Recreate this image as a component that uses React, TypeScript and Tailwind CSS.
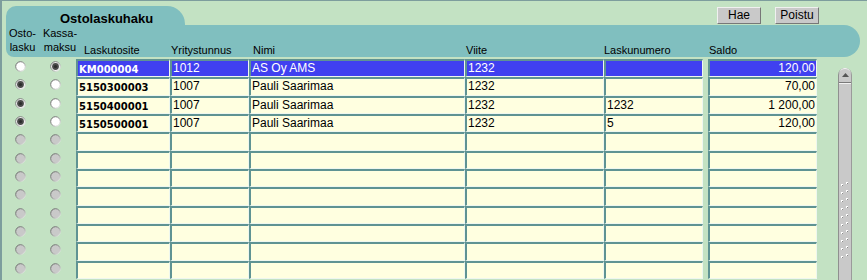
import React from "react";

type Row = {
  osto: boolean;
  kassa: boolean;
  tosite: string;
  yt: string;
  nimi: string;
  viite: string;
  nro: string;
  saldo: string;
  sel?: boolean;
  en: boolean;
};

const data: Row[] = [
  { osto: false, kassa: true, tosite: "KM000004", yt: "1012", nimi: "AS Oy AMS", viite: "1232", nro: "", saldo: "120,00", sel: true, en: true },
  { osto: true, kassa: false, tosite: "5150300003", yt: "1007", nimi: "Pauli Saarimaa", viite: "1232", nro: "", saldo: "70,00", en: true },
  { osto: true, kassa: false, tosite: "5150400001", yt: "1007", nimi: "Pauli Saarimaa", viite: "1232", nro: "1232", saldo: "1 200,00", en: true },
  { osto: true, kassa: false, tosite: "5150500001", yt: "1007", nimi: "Pauli Saarimaa", viite: "1232", nro: "5", saldo: "120,00", en: true },
];
while (data.length < 12) {
  data.push({ osto: false, kassa: false, tosite: "", yt: "", nimi: "", viite: "", nro: "", saldo: "", en: false });
}

function Radio({ checked, enabled }: { checked: boolean; enabled: boolean }) {
  const fill = enabled ? "#ffffff" : "#c9c9c9";
  return (
    <svg width="11" height="11" viewBox="0 0 11 11" className="block">
      <defs>
        <linearGradient id="rg" x1="0" y1="0" x2="1" y2="1">
          <stop offset="0" stopColor="#5a5a5a" />
          <stop offset="0.55" stopColor="#9a9a9a" />
          <stop offset="1" stopColor="#ffffff" />
        </linearGradient>
      </defs>
      <circle cx="5.5" cy="5.5" r="4.8" fill={fill} stroke="url(#rg)" strokeWidth="1" />
      {checked && <circle cx="5.5" cy="5.5" r="3.4" fill="#4a4a4a" />}
      {checked && <circle cx="5.5" cy="5.5" r="1.6" fill="#2c2c2c" />}
    </svg>
  );
}

const cellBase =
  "h-full border-t-2 border-l-2 border-r border-b border-t-[#5f9393] border-l-[#5f9393] border-r-[#eef7ef] border-b-[#eef7ef] overflow-hidden whitespace-nowrap";

function Cell({ w, sel, children, right, bold }: { w: string; sel?: boolean; children?: React.ReactNode; right?: boolean; bold?: boolean }) {
  return (
    <div
      className={`${cellBase} ${w} ${sel ? "bg-[#4040f0] text-white" : "bg-[#ffffe0] text-black"} ${right ? "text-right pr-[1px]" : "pl-[1px]"} ${
        bold ? "font-['DejaVu_Sans',sans-serif] font-bold text-[10px] leading-[15px] pt-[1px]" : "text-[12px] leading-[15px]"
      }`}
    >
      {children}
    </div>
  );
}

export default function App() {
  return (
    <div className="w-[867px] h-[280px] overflow-hidden bg-[#c3e2c3] border-t border-l-2 border-[#7d9d9d] font-['Liberation_Sans',Arial,sans-serif] text-black">
      {/* header */}
      <div className="flex justify-between items-start h-[24px]">
        <div className="mt-[5px] ml-[4px] w-[179px] h-[19px] bg-[#80bfbf] rounded-tl-[10px] rounded-tr-[18px] pl-[54px] pt-[5px] font-bold text-[13px] leading-[15px]">
          Ostolaskuhaku
        </div>
        <div className="flex gap-[14px] mt-[6px] mr-[48px]">
          <div className="w-[44px] h-[17px] bg-[#c9c9c9] border border-t-[#f0f0f0] border-l-[#f0f0f0] border-b-[#777777] border-r-[#777777] text-[12px] leading-[15px] text-center">
            Hae
          </div>
          <div className="w-[44px] h-[17px] bg-[#c9c9c9] border border-t-[#f0f0f0] border-l-[#f0f0f0] border-b-[#777777] border-r-[#777777] text-[12px] leading-[15px] text-center">
            Poistu
          </div>
        </div>
      </div>

      {/* label bar */}
      <div className="ml-[4px] w-[854px] h-[32px] bg-[#80bfbf] rounded-r-[16px] rounded-bl-[8px] flex text-[11px] leading-[14px]">
        <div className="w-[33px] pt-[1px] text-center">
          <div>Osto-</div>
          <div>lasku</div>
        </div>
        <div className="w-[42px] pt-[1px] text-center">
          <div>Kassa-</div>
          <div>maksu</div>
        </div>
        <div className="w-[3px]" />
        <div className="w-[87px] self-end">Laskutosite</div>
        <div className="w-[82px] self-end">Yritystunnus</div>
        <div className="w-[213px] self-end">Nimi</div>
        <div className="w-[138px] self-end">Viite</div>
        <div className="w-[105px] self-end">Laskunumero</div>
        <div className="self-end">Saldo</div>
      </div>

      {/* body */}
      <div className="flex">
        <div className="flex flex-col mt-[2px]">
          {data.map((r, i) => (
            <div key={i} className="flex h-[18.33px]">
              <div className="w-[74px] flex items-center pl-[13px] gap-[24px] pb-[3px]">
                <Radio checked={r.osto} enabled={r.en} />
                <Radio checked={r.kassa} enabled={r.en} />
              </div>
              <Cell w="w-[94px]" sel={r.sel} bold>
                {r.tosite}
              </Cell>
              <Cell w="w-[79px]" sel={r.sel}>
                {r.yt}
              </Cell>
              <Cell w="w-[216px]" sel={r.sel}>
                {r.nimi}
              </Cell>
              <Cell w="w-[139px]" sel={r.sel}>
                {r.viite}
              </Cell>
              <Cell w="w-[99px]" sel={r.sel}>
                {r.nro}
              </Cell>
              <div className="w-[5px]" />
              <Cell w="w-[109px]" sel={r.sel} right>
                {r.saldo}
              </Cell>
            </div>
          ))}
        </div>

        {/* scrollbar */}
        <div className="ml-[21px] mt-[11px] w-[14px] h-[240px] bg-[#c9c9c9] border-l border-r border-l-[#8f8f8f] border-r-[#9a9a9a] rounded-t-[7px] flex flex-col">
          <div className="h-[15px] border-b border-b-[#7a7a7a] rounded-t-[7px] border-t border-t-[#f4f4f4] flex justify-center pt-[4px]">
            <svg width="7" height="4" viewBox="0 0 7 4" className="block">
              <path d="M0 4 L3.5 0 L7 4 Z" fill="#555555" />
            </svg>
          </div>
          <div className="h-0 border-t border-t-[#f2f2f2]" />
          <div className="mt-[98px] flex justify-center">
            <svg width="10" height="82" viewBox="0 0 10 82" className="block">
              {Array.from({ length: 10 }).map((_, k) => (
                <g key={k}>
                  <rect x="1" y={k * 8 + 2} width="2" height="2" fill="#ffffff" />
                  <rect x="2" y={k * 8 + 3} width="1" height="1" fill="#8a8a8a" />
                  <rect x="6" y={k * 8} width="2" height="2" fill="#ffffff" />
                  <rect x="7" y={k * 8 + 1} width="1" height="1" fill="#8a8a8a" />
                </g>
              ))}
            </svg>
          </div>
        </div>
      </div>
    </div>
  );
}
